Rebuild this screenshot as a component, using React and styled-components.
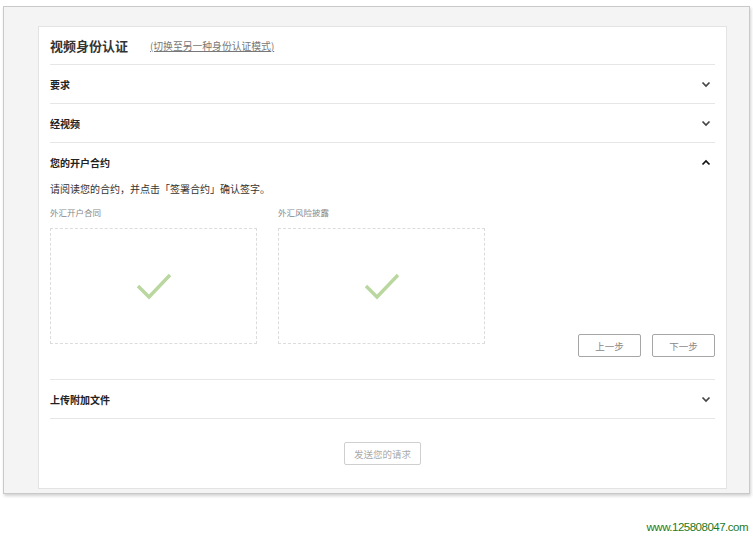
import React from 'react';
import styled, { createGlobalStyle } from 'styled-components';

const GlobalStyle = createGlobalStyle`
  body {
    margin: 0;
    background: #ffffff;
    font-family: "Noto Sans CJK SC", "Liberation Sans", sans-serif;
  }
`;

const Chevron = ({ up }) => (
  <svg width="10" height="7" viewBox="0 0 10 7">
    <path
      d={up ? 'M1.5 5.5 L5 2 L8.5 5.5' : 'M1.5 1.5 L5 5 L8.5 1.5'}
      fill="none"
      stroke={up ? '#111' : '#444'}
      strokeWidth="1.7"
    />
  </svg>
);

const Check = () => (
  <svg width="36" height="30" viewBox="0 0 36 30">
    <path d="M2 15 L13 26 L34 4" fill="none" stroke="#b9d79f" strokeWidth="3.4" />
  </svg>
);

const sections = [
  { title: '要求' },
  { title: '经视频' },
];

const docs = ['外汇开户合同', '外汇风险披露'];

const App = () => {
  return (
    <>
      <GlobalStyle />
      <Frame>
        <Card>
          <Header>
            <Title>视频身份认证</Title>
            <SwitchLink href="#">(切换至另一种身份认证模式)</SwitchLink>
          </Header>
          {sections.map((s) => (
            <Row key={s.title}>
              <RowTitle>{s.title}</RowTitle>
              <Chevron />
            </Row>
          ))}
          <Section>
            <Row $open>
              <RowTitle>您的开户合约</RowTitle>
              <Chevron up />
            </Row>
            <Intro>请阅读您的合约，并点击「签署合约」确认签字。</Intro>
            <Body>
              <Docs>
                {docs.map((d) => (
                  <Doc key={d}>
                    <DocLabel>{d}</DocLabel>
                    <DocBox>
                      <Check />
                    </DocBox>
                  </Doc>
                ))}
              </Docs>
              <Actions>
                <StepButton>上一步</StepButton>
                <StepButton>下一步</StepButton>
              </Actions>
            </Body>
          </Section>
          <Row>
            <RowTitle>上传附加文件</RowTitle>
            <Chevron />
          </Row>
          <Submit>
            <SubmitButton disabled>发送您的请求</SubmitButton>
          </Submit>
        </Card>
      </Frame>
      <Watermark>www.125808047.com</Watermark>
    </>
  );
};

const Frame = styled.div`
  margin: 6px 0 0 3px;
  width: 711px;
  height: 467px;
  padding: 19px 0 0 34px;
  background: #f4f4f4;
  border: 1px solid #c9c9c9;
  box-shadow: 1px 2px 3px rgba(0, 0, 0, 0.18);
`;

const Card = styled.div`
  width: 665px;
  height: 461px;
  padding: 0 11px;
  background: #ffffff;
  border: 1px solid #e3e3e3;
`;

const Header = styled.div`
  display: flex;
  align-items: center;
  height: 37px;
  border-bottom: 1px solid #e6e6e6;
`;

const Title = styled.div`
  font-size: 13px;
  font-weight: 700;
  color: #333;
`;

const SwitchLink = styled.a`
  margin-left: 22px;
  font-size: 9.8px;
  color: #777;
  text-decoration: underline;
`;

const Row = styled.div`
  display: flex;
  align-items: center;
  justify-content: space-between;
  height: 38px;
  padding-right: 4px;
  border-bottom: ${(p) => (p.$open ? 'none' : '1px solid #e6e6e6')};
`;

const RowTitle = styled.div`
  font-size: 10px;
  font-weight: 700;
  color: #222;
`;

const Section = styled.div`
  padding-bottom: 22px;
  border-bottom: 1px solid #e6e6e6;
`;

const Intro = styled.div`
  margin-top: 1px;
  font-size: 10px;
  color: #333;
  line-height: 14px;
`;

const Body = styled.div`
  display: flex;
  justify-content: space-between;
  align-items: flex-end;
  margin-top: 10px;
`;

const Docs = styled.div`
  display: flex;
  gap: 21px;
  padding-bottom: 13px;
`;

const Doc = styled.div`
  display: flex;
  flex-direction: column;
`;

const DocLabel = styled.div`
  font-size: 8.5px;
  color: #888;
  line-height: 13px;
  margin-bottom: 9px;
`;

const DocBox = styled.div`
  display: flex;
  align-items: center;
  justify-content: center;
  width: 205px;
  height: 114px;
  border: 1px dashed #dcdcdc;
`;

const Actions = styled.div`
  display: flex;
  gap: 11px;
`;

const StepButton = styled.button`
  width: 63px;
  height: 23px;
  padding: 0;
  background: #fff;
  border: 1px solid #a6a6a6;
  border-radius: 2px;
  font-family: inherit;
  font-size: 9.5px;
  color: #888;
`;

const Submit = styled.div`
  display: flex;
  justify-content: center;
  padding-top: 23px;
`;

const SubmitButton = styled.button`
  width: 77px;
  height: 23px;
  padding: 0;
  background: #fff;
  border: 1px solid #cfcfcf;
  border-radius: 2px;
  font-family: inherit;
  font-size: 9.5px;
  color: #aaa;
`;

const Watermark = styled.div`
  margin-top: 27px;
  padding-right: 5px;
  text-align: right;
  font-family: "Liberation Sans", Arial, sans-serif;
  font-size: 11.5px;
  letter-spacing: -0.5px;
  color: #1d7a1d;
`;

export default App;
